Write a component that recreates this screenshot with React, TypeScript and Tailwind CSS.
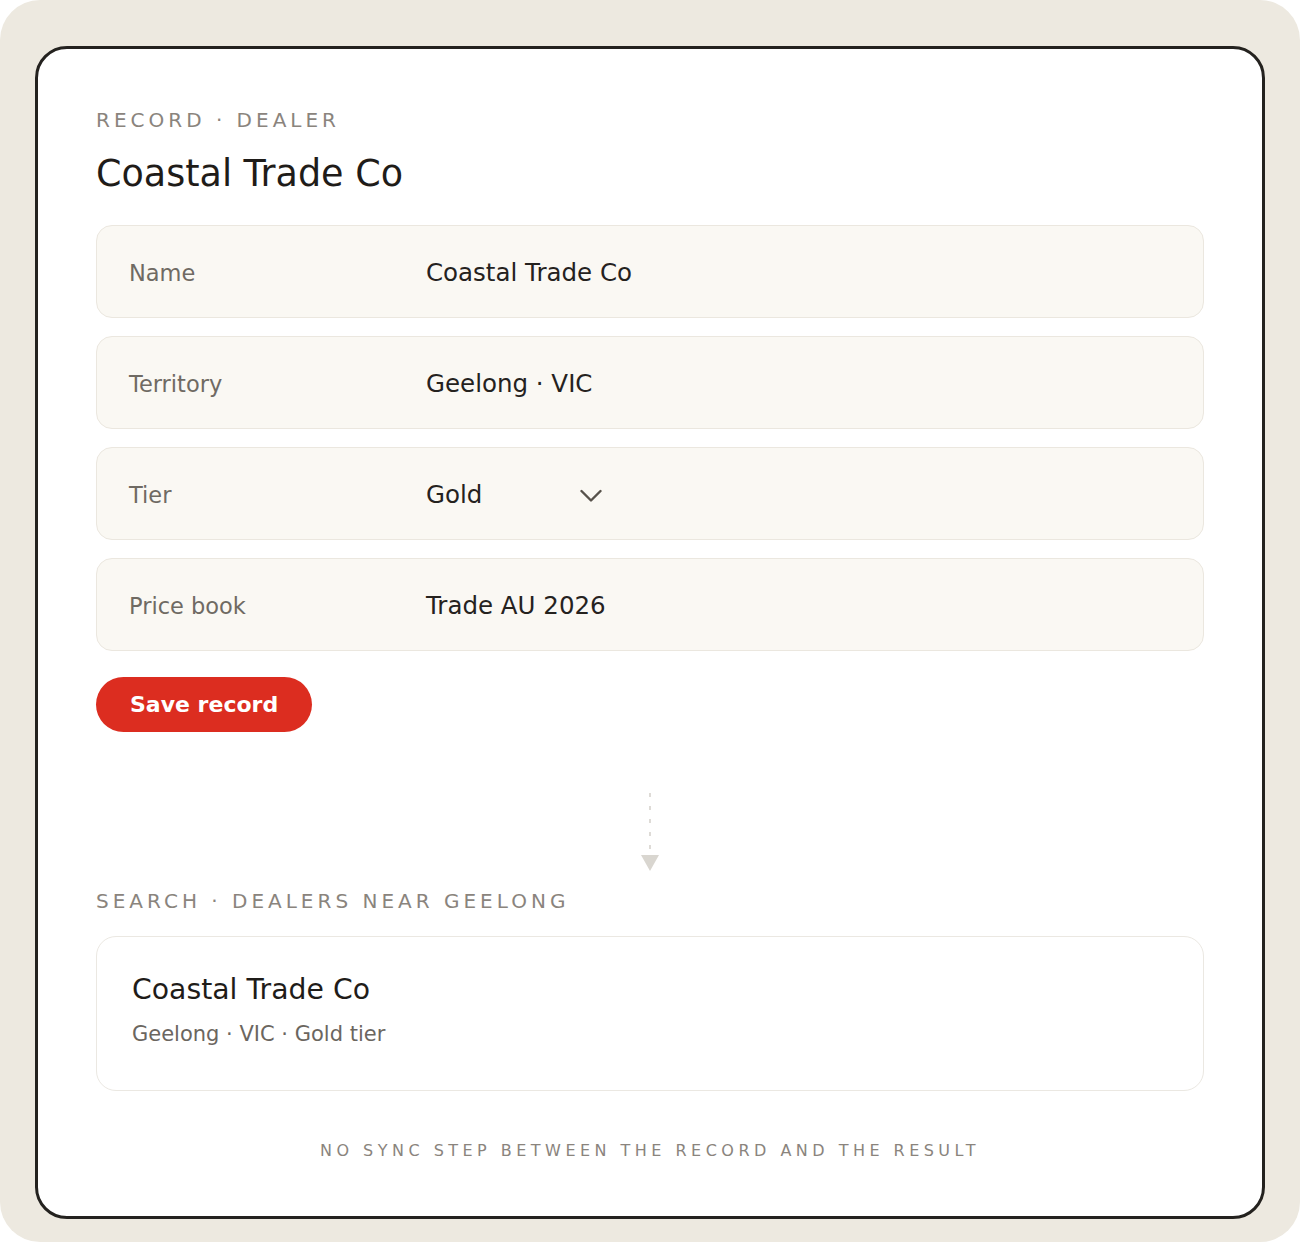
const fields = [
  { label: "Name", value: "Coastal Trade Co" },
  { label: "Territory", value: "Geelong · VIC" },
  { label: "Tier", value: "Gold", select: true },
  { label: "Price book", value: "Trade AU 2026" },
];

function Chevron() {
  return (
    <svg width="22" height="14" viewBox="0 0 22 14" fill="none">
      <polyline
        points="1.5,2 11,11.5 20.5,2"
        stroke="#57524b"
        strokeWidth="2.4"
        strokeLinecap="round"
        strokeLinejoin="round"
      />
    </svg>
  );
}

function FlowArrow() {
  return (
    <svg width="24" height="78" viewBox="0 0 24 78" fill="none">
      <line
        x1="12"
        y1="0"
        x2="12"
        y2="60"
        stroke="#d6d3cd"
        strokeWidth="1.6"
        strokeDasharray="4 9"
      />
      <polygon points="3,62 21,62 12,78" fill="#d9d6d0" />
    </svg>
  );
}

export default function App() {
  return (
    <div
      className="w-[1300px] h-[1242px] rounded-[40px] bg-[#ede9e0] px-[35px] pt-[46px] pb-[23px] flex"
      style={{ fontFamily: '"DejaVu Sans", "Liberation Sans", sans-serif' }}
    >
      <div className="flex-1 rounded-[32px] border-[3px] border-[#24221f] bg-white px-[58px] pt-[56px] flex flex-col">
        <p className="text-[20px] leading-[30px] tracking-[0.2em] text-[#8a847d]">
          RECORD · DEALER
        </p>
        <h1 className="mt-[17px] text-[36.5px] leading-[43px] text-[#1f1c19]">
          Coastal Trade Co
        </h1>

        <div className="mt-[30px] flex flex-col gap-[18px]">
          {fields.map((f) => (
            <div
              key={f.label}
              className="h-[93px] rounded-[16px] border border-[#ebe7df] bg-[#faf8f3] pl-[32px] pt-[4px] flex items-center"
            >
              <span className="w-[297px] text-[22.5px] text-[#6f6a63]">{f.label}</span>
              {f.select ? (
                <div className="w-[176px] flex items-center justify-between">
                  <span className="text-[24.5px] text-[#25221e]">{f.value}</span>
                  <Chevron />
                </div>
              ) : (
                <span className="text-[24.5px] text-[#25221e]">{f.value}</span>
              )}
            </div>
          ))}
        </div>

        <div className="mt-[26px]">
          <button className="h-[55px] rounded-full bg-[#dc2d20] px-[34px] text-[22px] font-bold text-white">
            Save record
          </button>
        </div>

        <div className="mt-[61px] mb-[15px] flex justify-center">
          <FlowArrow />
        </div>

        <p className="text-[20px] leading-[30px] tracking-[0.2em] text-[#8a847d]">
          SEARCH · DEALERS NEAR GEELONG
        </p>

        <div className="mt-[20px] h-[155px] rounded-[20px] border border-[#ebe8e2] bg-white px-[35px] pt-[36px]">
          <p className="text-[28.3px] leading-[34px] text-[#1f1c19]">Coastal Trade Co</p>
          <p className="mt-[13px] text-[21px] leading-[29px] text-[#6b665f]">
            Geelong · VIC · Gold tier
          </p>
        </div>

        <p className="mt-[48px] text-center text-[16px] leading-[24px] tracking-[0.28em] text-[#8a847d]">
          NO SYNC STEP BETWEEN THE RECORD AND THE RESULT
        </p>
      </div>
    </div>
  );
}
